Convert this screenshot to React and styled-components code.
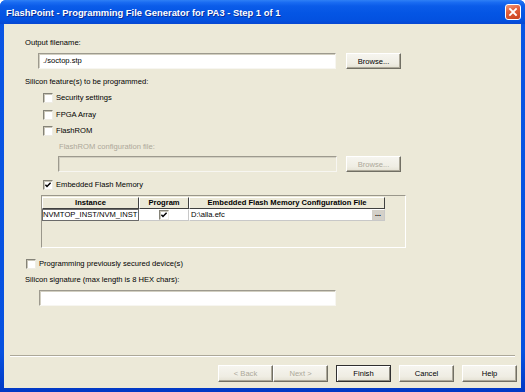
import React from "react";
import styled, { createGlobalStyle } from "styled-components";

const GlobalStyle = createGlobalStyle`
  html, body { margin: 0; padding: 0; background: #ffffff; }
  body { font-family: "Liberation Sans", Arial, sans-serif; }
  * { box-sizing: border-box; }
`;

const Window = styled.div`
  width: 525px;
  height: 392px;
  display: flex;
  flex-direction: column;
  border-radius: 6px 6px 0 0;
  overflow: hidden;
  background: linear-gradient(180deg, #0a55e4 0%, #0651e0 90%, #0238c4 100%);
`;

const TitleBar = styled.div`
  height: 24px;
  flex: none;
  display: flex;
  align-items: center;
  padding: 0 4px 0 6px;
  background: linear-gradient(
    180deg,
    #2f80f5 0%,
    #1a6cf2 10%,
    #0b5ce9 25%,
    #0455e4 55%,
    #0351e0 85%,
    #0848d2 100%
  );
`;

const Title = styled.div`
  color: #ffffff;
  font-family: "Liberation Sans", Arial, sans-serif;
  font-weight: bold;
  font-size: 9.4px;
  text-shadow: 1px 1px 0 #0b2e9a;
  white-space: nowrap;
`;

const CloseButton = styled.div`
  margin-left: auto;
  width: 16px;
  height: 16px;
  border: 1px solid #ffffff;
  border-radius: 3px;
  background: linear-gradient(160deg, #f09a7c 0%, #e2603c 40%, #c8401b 100%);
  display: flex;
  align-items: center;
  justify-content: center;
`;

const Content = styled.div`
  flex: 1;
  margin: 0 4px 4px 4px;
  background: #ece9d8;
  display: flex;
  flex-direction: column;
`;

const Form = styled.div`
  flex: 1;
  display: flex;
  flex-direction: column;
  align-items: flex-start;
  padding: 14px 0 0 21px;
`;

const Text = styled.div`
  height: 10px;
  line-height: 10px;
  font-size: 7.6px;
  white-space: nowrap;
  color: ${(p) => (p.$disabled ? "#aca899" : "#000000")};
  margin-top: ${(p) => p.$mt || 0}px;
  margin-left: ${(p) => p.$ml || 0}px;
`;

const Row = styled.div`
  display: flex;
  align-items: center;
  gap: ${(p) => p.$gap || 0}px;
  margin-top: ${(p) => p.$mt || 0}px;
  margin-left: ${(p) => p.$ml || 0}px;
`;

const Field = styled.div`
  width: ${(p) => p.$width}px;
  height: 16px;
  border: 1px solid;
  border-color: #9d9a8e #f7f6f1 #f7f6f1 #9d9a8e;
  box-shadow: inset 1px 1px 0 #d2cfc1;
  background: ${(p) => (p.$disabled ? "#ece9d8" : "#ffffff")};
  font-size: 7.6px;
  line-height: 14px;
  padding-left: 4px;
  color: #000000;
  white-space: nowrap;
`;

const Button = styled.div`
  width: 55px;
  height: ${(p) => p.$height || 16}px;
  display: flex;
  align-items: center;
  justify-content: center;
  font-size: 7.6px;
  color: ${(p) => (p.$disabled ? "#aca899" : "#000000")};
  background: linear-gradient(180deg, #f6f5ef 0%, #efede3 70%, #e4e1d3 100%);
  border: 1px solid;
  border-color: ${(p) =>
    p.$primary ? "#303030" : "#ffffff #716f64 #716f64 #ffffff"};
  box-shadow: ${(p) =>
    p.$primary
      ? "inset 1px 1px 0 #ffffff, inset -1px -1px 0 #8c8a80"
      : "inset -1px -1px 0 #aca899"};
  white-space: nowrap;
`;

const CheckRow = styled.div`
  display: flex;
  align-items: center;
  gap: 3px;
  height: 10px;
  margin-top: ${(p) => p.$mt || 0}px;
  margin-left: ${(p) => p.$ml || 0}px;
`;

const Box = styled.span`
  width: 10px;
  height: 10px;
  flex: none;
  display: flex;
  align-items: center;
  justify-content: center;
  background: #ffffff;
  border: 1px solid;
  border-color: #858378 #eeece4 #eeece4 #858378;
  box-shadow: inset 1px 1px 0 #c9c6b8;
`;

const CheckLabel = styled.span`
  font-size: 7.6px;
  line-height: 10px;
  color: #000000;
  white-space: nowrap;
`;

const TableFrame = styled.div`
  width: 365px;
  height: 53px;
  margin-top: 5px;
  margin-left: 16px;
  padding-top: 1px;
  border: 1px solid;
  border-color: #9a978b #ffffff #ffffff #9a978b;
  background: #ece9d8;
`;

const Grid = styled.div`
  display: grid;
  grid-template-columns: 97px 50px 196px;
  grid-auto-rows: 12px;
`;

const HeaderCell = styled.div`
  border: 1px solid;
  border-color: #ffffff #404040 #404040 #ffffff;
  background: #ece9d8;
  font-size: 7.6px;
  font-weight: bold;
  line-height: 10px;
  text-align: center;
  white-space: nowrap;
  overflow: hidden;
`;

const Cell = styled.div`
  background: #ffffff;
  font-size: 7.6px;
  line-height: 10px;
  white-space: nowrap;
  overflow: hidden;
  display: flex;
  align-items: center;
  justify-content: ${(p) => p.$justify || "flex-start"};
  padding-left: ${(p) => (p.$justify === "center" || p.$framed ? 0 : 1)}px;
  border: 1px solid;
  border-color: ${(p) =>
    p.$framed ? "#6a6a6a" : "#ffffff #c8c8c8 #c8c8c8 #ffffff"};
`;

const CellText = styled.span`
  flex: 1;
`;

const EllipsisButton = styled.span`
  width: 12px;
  height: 10px;
  flex: none;
  background: #d4d0c8;
  font-size: 7px;
  font-weight: bold;
  line-height: 8px;
  text-align: center;
  color: #000000;
`;

const Footer = styled.div`
  flex: none;
  display: flex;
  flex-direction: column;
  padding-bottom: 6px;
`;

const Separator = styled.div`
  margin: 0 6px;
  border-top: 1px solid #aca899;
  border-bottom: 1px solid #ffffff;
`;

const ButtonRow = styled.div`
  display: flex;
  justify-content: flex-end;
  gap: 8px;
  margin-top: 8px;
  padding-right: 4px;
`;

const ButtonGroup = styled.div`
  display: flex;
`;

const CheckMark = () => (
  <svg width="8" height="8" viewBox="0 0 8 8">
    <path d="M1.4 3.8 L3 5.5 L6.6 1.8" fill="none" stroke="#000" strokeWidth="1.5" />
  </svg>
);

const Checkbox = ({ checked, label, mt, ml }) => (
  <CheckRow $mt={mt} $ml={ml}>
    <Box>{checked && <CheckMark />}</Box>
    {label && <CheckLabel>{label}</CheckLabel>}
  </CheckRow>
);

export default function App() {
  return (
    <>
      <GlobalStyle />
      <Window>
        <TitleBar>
          <Title>FlashPoint - Programming File Generator for PA3 - Step 1 of 1</Title>
          <CloseButton>
            <svg width="10" height="10" viewBox="0 0 10 10">
              <path d="M2 2 L8 8 M8 2 L2 8" stroke="#fff" strokeWidth="1.8" strokeLinecap="square" />
            </svg>
          </CloseButton>
        </TitleBar>
        <Content>
          <Form>
            <Text>Output filename:</Text>
            <Row $mt={5} $ml={13} $gap={10}>
              <Field $width={298}>./soctop.stp</Field>
              <Button>Browse...</Button>
            </Row>
            <Text $mt={8}>Silicon feature(s) to be programmed:</Text>
            <Checkbox mt={6} ml={18} label="Security settings" />
            <Checkbox mt={7} ml={18} label="FPGA Array" />
            <Checkbox mt={6} ml={18} label="FlashROM" />
            <Text $mt={6} $ml={34} $disabled>
              FlashROM configuration file:
            </Text>
            <Row $mt={4} $ml={33} $gap={9}>
              <Field $width={279} $disabled />
              <Button $disabled>Browse...</Button>
            </Row>
            <Checkbox mt={8} ml={18} checked label="Embedded Flash Memory" />
            <TableFrame>
              <Grid>
                <HeaderCell>Instance</HeaderCell>
                <HeaderCell>Program</HeaderCell>
                <HeaderCell>Embedded Flash Memory Configuration File</HeaderCell>
                <Cell $framed>NVMTOP_INST/NVM_INST</Cell>
                <Cell $justify="center">
                  <Box>
                    <CheckMark />
                  </Box>
                </Cell>
                <Cell>
                  <CellText>D:\alla.efc</CellText>
                  <EllipsisButton>...</EllipsisButton>
                </Cell>
              </Grid>
            </TableFrame>
            <Checkbox mt={11} ml={1} label="Programming previously secured device(s)" />
            <Text $mt={6}>Silicon signature (max length is 8 HEX chars):</Text>
            <Row $mt={5} $ml={14}>
              <Field $width={297} />
            </Row>
          </Form>
          <Footer>
            <Separator />
            <ButtonRow>
              <ButtonGroup>
                <Button $height={17} $disabled>
                  &lt; Back
                </Button>
                <Button $height={17} $disabled>
                  Next &gt;
                </Button>
              </ButtonGroup>
              <Button $height={17} $primary>
                Finish
              </Button>
              <Button $height={17}>Cancel</Button>
              <Button $height={17}>Help</Button>
            </ButtonRow>
          </Footer>
        </Content>
      </Window>
    </>
  );
}
